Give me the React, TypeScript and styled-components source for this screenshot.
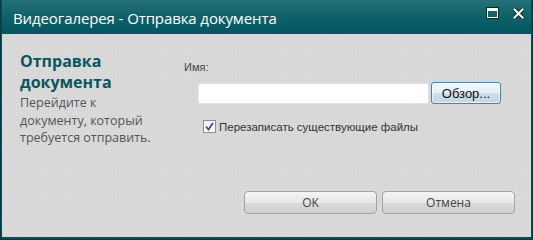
import React from "react";
import styled, { createGlobalStyle } from "styled-components";

const GlobalStyle = createGlobalStyle`
  html, body {
    margin: 0;
    padding: 0;
    background: #0e4f55;
  }
  body {
    font-family: "Open Sans", "DejaVu Sans", sans-serif;
  }
`;

// ===== window frame =====

const Window = styled.div`
  width: 533px;
  height: 240px;
  box-sizing: border-box;
  display: flex;
  flex-direction: column;
  background: #0f4d54;
  border: 1px solid #0a3a40;
  border-top: none;
  padding: 0 1px 2px 1px;
`;

const TitleBar = styled.div`
  height: 34px;
  flex-shrink: 0;
  display: flex;
  align-items: center;
  justify-content: space-between;
  padding: 0 7px 0 11px;
  background: linear-gradient(to bottom, #257178 0%, #11626a 45%, #005660 100%);
`;

const Title = styled.div`
  color: #ffffff;
  font-family: "Open Sans", "DejaVu Sans", sans-serif;
  font-size: 15px;
  letter-spacing: -0.1px;
  padding-top: 1px;
`;

const Controls = styled.div`
  display: flex;
  align-items: center;
  gap: 14px;
  margin-bottom: 8px;
`;

const Body = styled.div`
  flex: 1;
  display: flex;
  background-color: #d9d9d9;
  background-image: radial-gradient(rgba(0, 0, 0, 0.035) 1px, transparent 1px),
    radial-gradient(rgba(255, 255, 255, 0.05) 1px, transparent 1px);
  background-size: 3px 3px, 5px 5px;
  background-position: 0 0, 1px 2px;
`;

// ===== left panel =====

const Sidebar = styled.div`
  width: 165px;
  padding: 17px 9px 0 18px;
  box-sizing: border-box;
  flex-shrink: 0;
`;

const Heading = styled.h2`
  margin: 0;
  font-family: "Open Sans", "DejaVu Sans", sans-serif;
  font-size: 16px;
  font-weight: 700;
  line-height: 21px;
  color: #0a5660;
`;

const Hint = styled.p`
  margin: 1px 0 0;
  font-size: 12.5px;
  line-height: 17.5px;
  color: #555555;
`;

// ===== form =====

const Form = styled.div`
  flex: 1;
  display: flex;
  flex-direction: column;
  padding: 27px 16px 0 16px;
`;

const Label = styled.div`
  font-family: "Liberation Sans", Arial, sans-serif;
  font-size: 11px;
  color: #444444;
  margin-left: 1px;
`;

const FileRow = styled.div`
  display: flex;
  align-items: center;
  gap: 2px;
  margin: 9px 0 0 15px;
`;

const Input = styled.input`
  width: 231px;
  height: 21px;
  box-sizing: border-box;
  border: 1px solid #e2e2e2;
  border-radius: 2px;
  background: #ffffff;
  outline: none;
`;

const BrowseButton = styled.button`
  width: 70px;
  height: 22px;
  box-sizing: border-box;
  border: 1px solid #3f86b5;
  border-radius: 3px;
  background: linear-gradient(to bottom, #f4f9fc 0%, #e3eef5 50%, #cfdee8 51%, #c4d6e2 100%);
  box-shadow: inset 0 0 0 1px rgba(255, 255, 255, 0.6);
  font-family: "Liberation Sans", Arial, sans-serif;
  font-size: 13px;
  color: #111111;
  padding: 0;
`;

const CheckRow = styled.label`
  display: flex;
  align-items: center;
  gap: 3px;
  margin: 16px 0 0 20px;
  font-family: "Liberation Sans", Arial, sans-serif;
  font-size: 11.5px;
  color: #333333;
`;

const CheckBox = styled.span`
  width: 13px;
  height: 13px;
  box-sizing: border-box;
  border: 1px solid #8f8f8f;
  background: linear-gradient(to bottom, #f0f0f0, #ffffff);
  display: flex;
  align-items: center;
  justify-content: center;
`;

const Footer = styled.div`
  margin-top: auto;
  display: flex;
  justify-content: flex-end;
  gap: 5px;
  padding: 0 0 23px 0;
`;

const DialogButton = styled.button`
  width: 133px;
  height: 23px;
  box-sizing: border-box;
  border: 1px solid #a3a3a3;
  border-radius: 4px;
  background: linear-gradient(to bottom, #f4f4f4 0%, #e8e8e8 50%, #dadada 51%, #d0d0d0 100%);
  font-family: "Open Sans", "DejaVu Sans", sans-serif;
  font-size: 12px;
  color: #444444;
  padding: 0;
`;

// ===== component =====

export default function App() {
  return (
    <>
      <GlobalStyle />
      <Window>
        <TitleBar>
          <Title>Видеогалерея - Отправка документа</Title>
          <Controls>
            <svg width="13" height="12" viewBox="0 0 13 12">
              <rect x="0.5" y="0.5" width="12" height="11" fill="none" stroke="#0d2a2e" strokeWidth="1" />
              <rect x="1.5" y="1.5" width="10" height="9" fill="none" stroke="#ffffff" strokeWidth="1" />
              <rect x="2" y="2" width="9" height="2" fill="#ffffff" />
            </svg>
            <svg width="11" height="11" viewBox="0 0 11 11">
              <path d="M1.5 1.5 L9.5 9.5 M9.5 1.5 L1.5 9.5" stroke="#0d2a2e" strokeWidth="4" strokeLinecap="square" />
              <path d="M1.5 1.5 L9.5 9.5 M9.5 1.5 L1.5 9.5" stroke="#ffffff" strokeWidth="2" strokeLinecap="square" />
            </svg>
          </Controls>
        </TitleBar>
        <Body>
          <Sidebar>
            <Heading>Отправка документа</Heading>
            <Hint>Перейдите к документу, который требуется отправить.</Hint>
          </Sidebar>
          <Form>
            <Label>Имя:</Label>
            <FileRow>
              <Input type="text" />
              <BrowseButton type="button">Обзор...</BrowseButton>
            </FileRow>
            <CheckRow>
              <CheckBox>
                <svg width="9" height="9" viewBox="0 0 9 9">
                  <path d="M1 4.5 L3.5 7.5 L8 1" fill="none" stroke="#2f4f9e" strokeWidth="1.8" />
                </svg>
              </CheckBox>
              Перезаписать существующие файлы
            </CheckRow>
            <Footer>
              <DialogButton type="button">OK</DialogButton>
              <DialogButton type="button">Отмена</DialogButton>
            </Footer>
          </Form>
        </Body>
      </Window>
    </>
  );
}
